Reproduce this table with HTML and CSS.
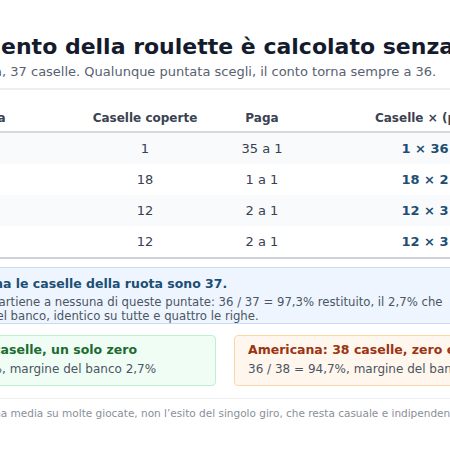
FILE: index.html
```html
<!DOCTYPE html>
<html lang="it">

<head>
    <meta charset="UTF-8">
    <meta name="viewport" content="width=device-width, initial-scale=1.0">
    <title>Roulette europea</title>
    <link rel="stylesheet" href="styles.css">
</head>

<body>

    <div class="page">
        <div class="page-header">
            <h1>Il rendimento della roulette è calcolato senza lo zero</h1>
            <p class="subtitle">Roulette europea, 37 caselle. Qualunque puntata scegli, il conto torna sempre a 36.</p>
        </div>

        <table class="bets">
            <colgroup>
                <col class="col-name">
                <col class="col-cells">
                <col class="col-pay">
                <col class="col-total">
            </colgroup>
            <thead>
                <tr>
                    <th class="left">Tipo di puntata</th>
                    <th>Caselle coperte</th>
                    <th>Paga</th>
                    <th class="total">Caselle × (paga + 1)</th>
                </tr>
            </thead>
            <tbody>
                <tr>
                    <td class="left">Pieno</td>
                    <td>1</td>
                    <td>35 a 1</td>
                    <td class="total">1 × 36 = 36</td>
                </tr>
                <tr>
                    <td class="left">Rosso / Nero</td>
                    <td>18</td>
                    <td>1 a 1</td>
                    <td class="total">18 × 2 = 36</td>
                </tr>
                <tr>
                    <td class="left">Dozzina</td>
                    <td>12</td>
                    <td>2 a 1</td>
                    <td class="total">12 × 3 = 36</td>
                </tr>
                <tr>
                    <td class="left">Colonna</td>
                    <td>12</td>
                    <td>2 a 1</td>
                    <td class="total">12 × 3 = 36</td>
                </tr>
            </tbody>
        </table>

        <div class="callout">
            <h3>Sempre 36, ma le caselle della ruota sono 37.</h3>
            <p>Lo zero non appartiene a nessuna di queste puntate: 36 / 37 = 97,3% restituito, il 2,7% che va al margine del banco, identico su tutte e quattro le righe.</p>
        </div>

        <div class="compare">
            <div class="card card-eu">
                <h4>Europea: 37 caselle, un solo zero</h4>
                <p>36 / 37 = 97,3%, margine del banco 2,7%</p>
            </div>
            <div class="card card-us">
                <h4>Americana: 38 caselle, zero e doppio zero</h4>
                <p>36 / 38 = 94,7%, margine del banco 5,3%</p>
            </div>
        </div>

        <p class="footnote">Nota: il margine è una media su molte giocate, non l’esito del singolo giro, che resta casuale e indipendente.</p>
    </div>

</body>

</html>
```

FILE: styles.css
```css
/* Basic reset */
* {
    margin: 0;
    padding: 0;
    box-sizing: border-box;
}

body {
    font-family: "DejaVu Sans", Verdana, sans-serif;
    background-color: #ffffff;
    color: #374151;
    display: flex;
    justify-content: center;
    overflow: hidden;
}

.page {
    width: 670px;
    flex-shrink: 0;
    padding: 33px 0 20px;
}

/* Header */
.page-header {
    padding-bottom: 7px;
    border-bottom: 2px solid #eceef1;
}

.page-header h1 {
    font-size: 22px;
    line-height: 28px;
    color: #141b2d;
    white-space: nowrap;
}

.subtitle {
    margin-top: 2px;
    font-size: 13px;
    line-height: 18px;
    color: #596170;
}

/* Table */
.bets {
    width: 100%;
    margin-top: 10px;
    border-collapse: collapse;
    table-layout: fixed;
    border-bottom: 2px solid #cfd3d9;
}

.col-name { width: 194px; }
.col-cells { width: 122px; }
.col-pay { width: 112px; }
.col-total { width: 242px; }

.bets th {
    font-size: 12px;
    line-height: 16px;
    font-weight: bold;
    color: #3b4252;
    text-align: center;
    padding: 10px 6px 5px;
    border-bottom: 2px solid #d6d9de;
    white-space: nowrap;
}

.bets td {
    font-size: 13px;
    line-height: 15px;
    text-align: center;
    padding: 8px 6px;
    color: #374151;
}

.bets tbody tr:nth-child(odd) {
    background-color: #f9fafb;
}

.bets .left {
    text-align: left;
    padding-left: 12px;
}

.bets .total {
    padding-left: 20px;
    padding-right: 10px;
}

.bets td.total {
    font-weight: bold;
    color: #1d4e74;
}

/* Callout */
.callout {
    margin-top: 8px;
    background-color: #eef5ff;
    border: 1px solid #c8dcf6;
    padding: 8px 14px 0;
}

.callout h3 {
    font-size: 12.5px;
    line-height: 16px;
    color: #1d4e74;
}

.callout p {
    margin-top: 4px;
    max-width: 548px;
    font-size: 11.7px;
    line-height: 13.5px;
    color: #4b5563;
}

/* Comparison cards */
.compare {
    display: grid;
    grid-template-columns: 1fr 1fr;
    gap: 18px;
    margin-top: 11px;
}

.card {
    border: 1px solid;
    border-radius: 4px;
    padding: 6px 13px 8px;
}

.card h4 {
    font-size: 12.5px;
    line-height: 16px;
    white-space: nowrap;
}

.card p {
    margin-top: 3px;
    font-size: 12px;
    line-height: 16px;
    color: #4b5563;
    white-space: nowrap;
}

.card-eu {
    background-color: #f0fdf4;
    border-color: #bbf1cc;
}

.card-eu h4 {
    color: #1c6b32;
}

.card-us {
    background-color: #fff7ed;
    border-color: #fdd6a8;
}

.card-us h4 {
    color: #9a3412;
}

/* Footnote */
.footnote {
    margin-top: 12px;
    padding-top: 8px;
    border-top: 1px solid #eceef1;
    font-size: 10.5px;
    line-height: 13px;
    color: #8a8f99;
    white-space: nowrap;
}
```
